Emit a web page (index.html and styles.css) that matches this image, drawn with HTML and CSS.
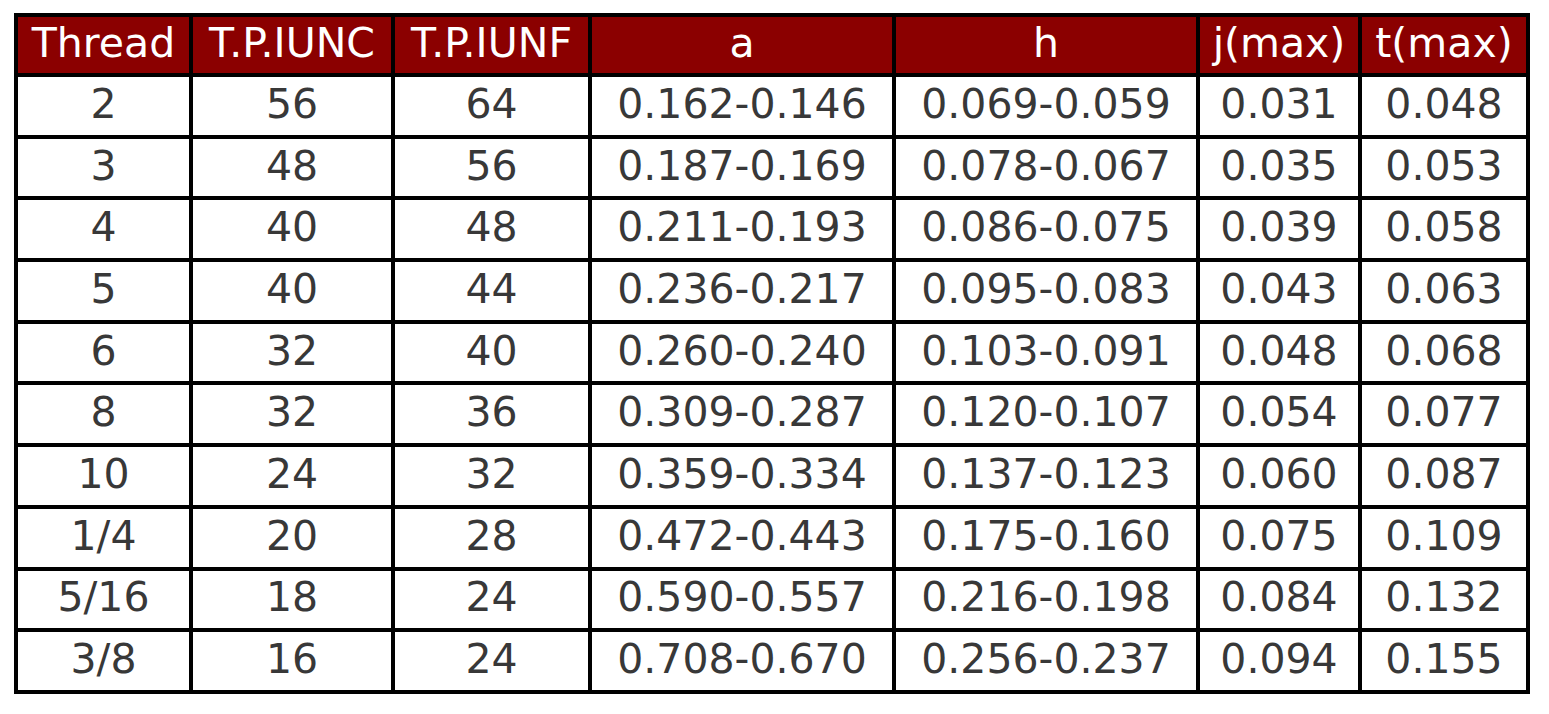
FILE: index.html
```html
<!DOCTYPE html>
<html>
<head>
<meta charset="utf-8">
<link rel="stylesheet" href="styles.css">
</head>
<body>
<table class="thread-table">
  <colgroup>
    <col class="c1"><col class="c2"><col class="c3"><col class="c4"><col class="c5"><col class="c6"><col class="c7">
  </colgroup>
  <thead>
    <tr><th>Thread</th><th>T.P.IUNC</th><th>T.P.IUNF</th><th>a</th><th>h</th><th>j(max)</th><th>t(max)</th></tr>
  </thead>
  <tbody>
    <tr><td>2</td><td>56</td><td>64</td><td>0.162-0.146</td><td>0.069-0.059</td><td>0.031</td><td>0.048</td></tr>
    <tr><td>3</td><td>48</td><td>56</td><td>0.187-0.169</td><td>0.078-0.067</td><td>0.035</td><td>0.053</td></tr>
    <tr><td>4</td><td>40</td><td>48</td><td>0.211-0.193</td><td>0.086-0.075</td><td>0.039</td><td>0.058</td></tr>
    <tr><td>5</td><td>40</td><td>44</td><td>0.236-0.217</td><td>0.095-0.083</td><td>0.043</td><td>0.063</td></tr>
    <tr><td>6</td><td>32</td><td>40</td><td>0.260-0.240</td><td>0.103-0.091</td><td>0.048</td><td>0.068</td></tr>
    <tr><td>8</td><td>32</td><td>36</td><td>0.309-0.287</td><td>0.120-0.107</td><td>0.054</td><td>0.077</td></tr>
    <tr><td>10</td><td>24</td><td>32</td><td>0.359-0.334</td><td>0.137-0.123</td><td>0.060</td><td>0.087</td></tr>
    <tr><td>1/4</td><td>20</td><td>28</td><td>0.472-0.443</td><td>0.175-0.160</td><td>0.075</td><td>0.109</td></tr>
    <tr><td>5/16</td><td>18</td><td>24</td><td>0.590-0.557</td><td>0.216-0.198</td><td>0.084</td><td>0.132</td></tr>
    <tr><td>3/8</td><td>16</td><td>24</td><td>0.708-0.670</td><td>0.256-0.237</td><td>0.094</td><td>0.155</td></tr>
  </tbody>
</table>
</body>
</html>
```

FILE: styles.css
```css
html, body {
  margin: 0;
  padding: 0;
  background: #ffffff;
}

body {
  padding: 13px 0 0 14px;
  font-family: "DejaVu Sans", "Liberation Sans", sans-serif;
}

.thread-table {
  border-collapse: separate;
  border-spacing: 0;
  table-layout: fixed;
  width: 1516px;
  border-top: 4px solid #000;
  border-left: 4px solid #000;
}

.c1 { width: 175px; }
.c2 { width: 202px; }
.c3 { width: 197px; }
.c4 { width: 304px; }
.c5 { width: 304px; }
.c6 { width: 162px; }
.c7 { width: 168px; }

.thread-table th,
.thread-table td {
  border-right: 4px solid #000;
  border-bottom: 4px solid #000;
  padding: 0 0 3px 0;
  text-align: center;
  vertical-align: middle;
  font-size: 41px;
  font-weight: normal;
  line-height: 1;
  white-space: nowrap;
  box-sizing: border-box;
}

.thread-table th {
  background: #8b0000;
  color: #ffffff;
  height: 60px;
}

.thread-table td {
  background: #ffffff;
  color: #383838;
  height: 61.7px;
}
```
